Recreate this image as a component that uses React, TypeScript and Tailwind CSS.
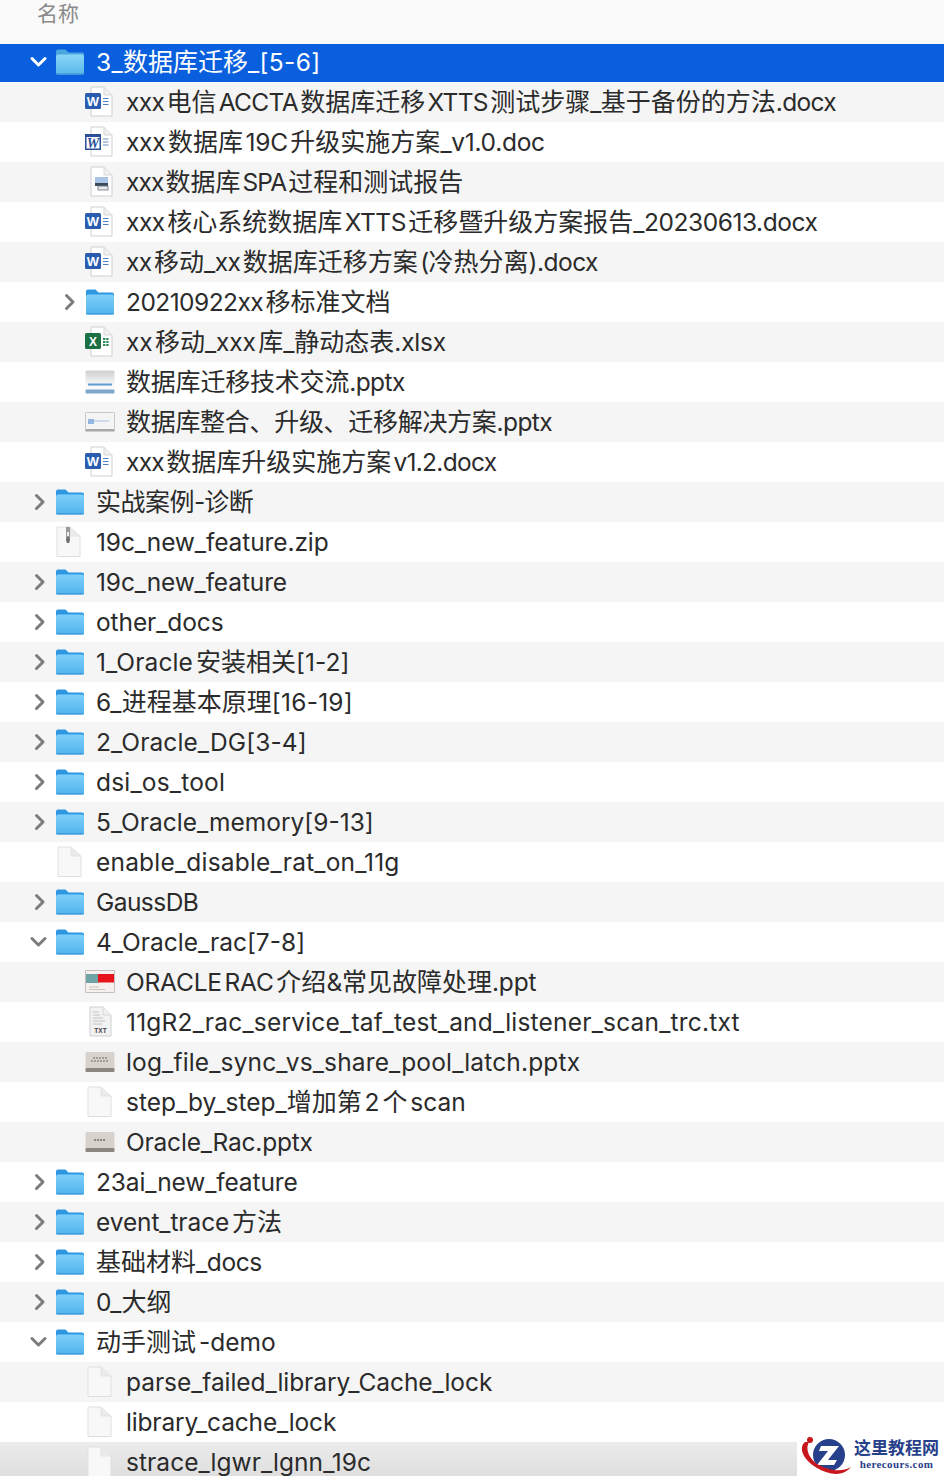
import React from "react";

type Kind = "folder" | "word" | "wordOld" | "spa" | "excel" | "pptBlue" | "pptLine" | "pptRed" | "pptGrey" | "pptGrey2" | "txt" | "blank" | "zip";
type Item = { t: string; k: Kind; l?: number; c?: "open" | "closed"; tr?: string; tc?: string };

const items: Item[] = [
  { t: "3_数据库迁移_[5-6]", k: "folder", c: "open", tr: "tracking-[0.35px]" },
  { t: "xxx 电信 ACCTA 数据库迁移 XTTS 测试步骤_基于备份的方法.docx", k: "word", l: 1, tr: "tracking-[-0.65px]" },
  { t: "xxx 数据库 19C 升级实施方案_v1.0.doc", k: "wordOld", l: 1, tr: "tracking-[-0.28px]" },
  { t: "xxx 数据库 SPA 过程和测试报告", k: "spa", l: 1, tr: "tracking-[-0.9px]" },
  { t: "xxx 核心系统数据库 XTTS 迁移暨升级方案报告_20230613.docx", k: "word", l: 1, tr: "tracking-[-0.46px]" },
  { t: "xx 移动_xx 数据库迁移方案 (冷热分离).docx", k: "word", l: 1, tr: "tracking-[-0.53px]" },
  { t: "20210922xx 移标准文档", k: "folder", l: 1, c: "closed", tr: "tracking-[-0.55px]" },
  { t: "xx 移动_xxx 库_静动态表.xlsx", k: "excel", l: 1, tr: "tracking-[-0.2px]" },
  { t: "数据库迁移技术交流.pptx", k: "pptBlue", l: 1, tr: "tracking-[-0.6px]", tc: "tracking-[-0.2px]" },
  { t: "数据库整合、升级、迁移解决方案.pptx", k: "pptLine", l: 1, tr: "tracking-[-0.6px]", tc: "tracking-[-0.3px]" },
  { t: "xxx 数据库升级实施方案 v1.2.docx", k: "word", l: 1, tr: "tracking-[-0.7px]" },
  { t: "实战案例-诊断", k: "folder", c: "closed", tr: "tracking-[-1px]", tc: "tracking-[-0.5px]" },
  { t: "19c_new_feature.zip", k: "zip", tr: "tracking-[-0.1px]" },
  { t: "19c_new_feature", k: "folder", c: "closed", tr: "tracking-[-0.13px]" },
  { t: "other_docs", k: "folder", c: "closed", tr: "tracking-[-0.1px]" },
  { t: "1_Oracle 安装相关[1-2]", k: "folder", c: "closed", tr: "tracking-[0.1px]" },
  { t: "6_进程基本原理[16-19]", k: "folder", c: "closed", tr: "tracking-[0.25px]" },
  { t: "2_Oracle_DG[3-4]", k: "folder", c: "closed", tr: "tracking-[0.1px]" },
  { t: "dsi_os_tool", k: "folder", c: "closed", tr: "tracking-[0.2px]" },
  { t: "5_Oracle_memory[9-13]", k: "folder", c: "closed" },
  { t: "enable_disable_rat_on_11g", k: "blank", tr: "tracking-[0.2px]" },
  { t: "GaussDB", k: "folder", c: "closed", tr: "tracking-[-0.55px]" },
  { t: "4_Oracle_rac[7-8]", k: "folder", c: "open" },
  { t: "ORACLE RAC 介绍&常见故障处理.ppt", k: "pptRed", l: 1, tr: "tracking-[-0.2px]" },
  { t: "11gR2_rac_service_taf_test_and_listener_scan_trc.txt", k: "txt", l: 1, tr: "tracking-[0.2px]" },
  { t: "log_file_sync_vs_share_pool_latch.pptx", k: "pptGrey", l: 1, tr: "tracking-[0.15px]" },
  { t: "step_by_step_增加第 2 个 scan", k: "blank", l: 1 },
  { t: "Oracle_Rac.pptx", k: "pptGrey2", l: 1, tr: "tracking-[-0.2px]" },
  { t: "23ai_new_feature", k: "folder", c: "closed", tr: "tracking-[-0.12px]" },
  { t: "event_trace 方法", k: "folder", c: "closed", tr: "tracking-[-0.1px]" },
  { t: "基础材料_docs", k: "folder", c: "closed", tr: "tracking-[-0.4px]" },
  { t: "0_大纲", k: "folder", c: "closed" },
  { t: "动手测试 -demo", k: "folder", c: "open" },
  { t: "parse_failed_library_Cache_lock", k: "blank", l: 1, tr: "tracking-[-0.06px]" },
  { t: "library_cache_lock", k: "blank", l: 1, tr: "tracking-[-0.17px]" },
  { t: "strace_lgwr_lgnn_19c", k: "blank", l: 1, tr: "tracking-[0.05px]" },
];

function Page({ children, fill = "#ffffff", x = 6 }: { children?: React.ReactNode; fill?: string; x?: number }) {
  return (
    <svg width="30" height="32" viewBox="0 0 30 32" className="block">
      <path d={`M${x} 1H${x + 13}L${x + 21} 9V30H${x}Z`} fill={fill} stroke="#cfcfcf" strokeWidth="1" />
      <path d={`M${x + 13} 1V9H${x + 21}`} fill="#f0f0f0" stroke="#d8d8d8" strokeWidth="1" />
      {children}
    </svg>
  );
}

function Icon({ k, selected }: { k: Kind; selected?: boolean }) {
  switch (k) {
    case "folder": {
      const id = selected ? "fs" : "fn";
      return (
        <svg width="30" height="28" viewBox="0 0 30 28" className="block">
          <defs>
            <linearGradient id={id} x1="0" y1="0" x2="0" y2="1">
              <stop offset="0" stopColor={selected ? "#8ad6f8" : "#7dd0fa"} />
              <stop offset="1" stopColor={selected ? "#5ab8ea" : "#52b2ee"} />
            </linearGradient>
          </defs>
          <path d="M1 3.5A2 2 0 0 1 3 1.5H10.5L13.5 4.5H27A2 2 0 0 1 29 6.5V10H1Z" fill={selected ? "#4aa6df" : "#2f97e2"} />
          <rect x="1" y="6.5" width="28" height="20" rx="2" fill={`url(#${id})`} />
          <rect x="1" y="25" width="28" height="1.5" rx="0.7" fill={selected ? "#4aa0d8" : "#3f9ddb"} />
        </svg>
      );
    }
    case "word":
      return (
        <Page>
          <rect x="0" y="7" width="16" height="16" rx="1.5" fill="#2a5caf" />
          <text x="8" y="20" textAnchor="middle" fontSize="13" fontWeight="700" fill="#ffffff" fontFamily="Liberation Sans">W</text>
          <path d="M18 12.5H23.5M18 15.5H23.5M18 18.5H23.5" stroke="#4f7fc4" strokeWidth="1" />
        </Page>
      );
    case "wordOld":
      return (
        <Page>
          <rect x="0" y="8" width="16" height="16" fill="#2a4f96" />
          <rect x="1.5" y="11" width="13" height="11.5" fill="#ffffff" />
          <text x="8" y="21.5" textAnchor="middle" fontSize="14" fontWeight="700" fontStyle="italic" fill="#2a4f96" fontFamily="Liberation Serif">W</text>
          <path d="M18 13H23.5M18 16H23.5M18 19H23.5" stroke="#6b8bbd" strokeWidth="1" />
        </Page>
      );
    case "spa":
      return (
        <Page>
          <rect x="10" y="11" width="13" height="7" fill="#a9c4e6" />
          <rect x="10" y="17" width="13" height="3" fill="#3a4a5c" />
          <rect x="13" y="20" width="10" height="4" fill="#e8e8e8" stroke="#6a7480" strokeWidth="0.8" />
        </Page>
      );
    case "excel":
      return (
        <Page>
          <rect x="0" y="7" width="16" height="16" rx="1.5" fill="#1d7044" />
          <text x="8" y="19.5" textAnchor="middle" fontSize="12" fontWeight="700" fill="#ffffff" fontFamily="Liberation Sans">X</text>
          <path d="M18 12h2.4v2H18zM21.2 12h2.4v2h-2.4zM18 15h2.4v2H18zM21.2 15h2.4v2h-2.4zM18 18h2.4v2H18zM21.2 18h2.4v2h-2.4z" fill="#2f8c5a" />
        </Page>
      );
    case "txt":
      return (
        <Page fill="#f2f2f2" x={5}>
          <path d="M8 6H14M8 9H15M8 12H18M8 15H20M8 18H17" stroke="#bdbdbd" strokeWidth="0.9" />
          <text x="15.5" y="27" textAnchor="middle" fontSize="6.5" fontWeight="700" fill="#444" fontFamily="Liberation Sans">TXT</text>
        </Page>
      );
    case "blank":
      return (
        <svg width="30" height="32" viewBox="0 0 30 32" className="block">
          <path d="M3 1H16L26 10V30.5H3Z" fill="#f8f8f8" stroke="#e0e0e0" />
          <path d="M16 1V10H26" fill="#ebebeb" stroke="#e2e2e2" />
        </svg>
      );
    case "zip":
      return (
        <svg width="30" height="32" viewBox="0 0 30 32" className="block">
          <path d="M2 1H15L25 10V30.5H2Z" fill="#f8f8f8" stroke="#e0e0e0" />
          <path d="M15 1V10H25" fill="#ebebeb" stroke="#e2e2e2" />
          <rect x="11" y="1" width="4" height="14" fill="#9a9a9a" />
          <rect x="12" y="6" width="2" height="4" fill="#f0f0f0" />
          <rect x="11.5" y="11" width="3" height="6" rx="1" fill="#6f6f6f" />
        </svg>
      );
    case "pptBlue":
      return (
        <svg width="30" height="26" viewBox="0 0 30 26" className="block">
          <defs>
            <linearGradient id="pb" x1="0" y1="0" x2="0" y2="1">
              <stop offset="0" stopColor="#cfcfcf" />
              <stop offset="0.6" stopColor="#f4f4f4" />
              <stop offset="1" stopColor="#ffffff" />
            </linearGradient>
          </defs>
          <rect x="0.5" y="1.5" width="29" height="21" rx="1" fill="url(#pb)" />
          <rect x="0.5" y="20.5" width="29" height="4" rx="1" fill="#7fa8c8" />
          <rect x="3" y="14.5" width="24" height="2" fill="#5f9cd2" />
        </svg>
      );
    case "pptLine":
      return (
        <svg width="30" height="24" viewBox="0 0 30 24" className="block">
          <rect x="0.5" y="2.5" width="29" height="17" rx="1" fill="#f4f4f4" stroke="#c8c8c8" />
          <rect x="0.5" y="19" width="29" height="2.5" fill="#a8a8a8" />
          <rect x="3" y="9" width="6" height="5" fill="#94b6e2" />
          <path d="M9 11H24" stroke="#a8c0dc" strokeWidth="1" />
        </svg>
      );
    case "pptRed":
      return (
        <svg width="30" height="26" viewBox="0 0 30 26" className="block">
          <rect x="0.5" y="1.5" width="29" height="22" rx="0.5" fill="#f6f1ee" stroke="#c4bebe" />
          <rect x="1" y="5" width="28" height="8.5" fill="#e8141c" />
          <rect x="1" y="5" width="12" height="9" fill="#6fa3a5" />
          <path d="M4 18H14M4 20.5H20" stroke="#c4b6b0" strokeWidth="0.8" />
        </svg>
      );
    case "pptGrey":
    case "pptGrey2":
      return (
        <svg width="30" height="24" viewBox="0 0 30 24" className="block">
          <rect x="0.5" y="2" width="29" height="19" rx="1.5" fill="#d8d2cc" />
          <rect x="0.5" y="18" width="29" height="4" rx="1" fill="#8c867f" />
          {k === "pptGrey" ? (
            <path d="M8 8H23M6 11H24" stroke="#6e6862" strokeWidth="1" strokeDasharray="2 1" />
          ) : (
            <path d="M9 10H21" stroke="#6e6862" strokeWidth="1.4" strokeDasharray="2 1" />
          )}
        </svg>
      );
  }
}

function Chevron({ open, selected }: { open: boolean; selected?: boolean }) {
  return (
    <svg width="20" height="20" viewBox="0 0 20 20" className="block" fill="none" stroke={selected ? "#ffffff" : "#7c7c7c"} strokeWidth="3" strokeLinecap="round" strokeLinejoin="round">
      {open ? <path d="M3 6.5L9.5 13L16 6.5" /> : <path d="M7.5 3.5L14 10L7.5 16.5" />}
    </svg>
  );
}

const CJK = /([\u2E80-\u9FFF\u3000-\u303F\uFF00-\uFFEF]+)/;

function Label({ item }: { item: Item }) {
  return (
    <span className="ml-[11px] whitespace-nowrap leading-none [word-spacing:-4px]">
      {item.t.split(CJK).map((part, i) =>
        i % 2 === 1 ? (
          <span key={i} className={`text-[25px] ${item.tc ?? ""}`}>{part}</span>
        ) : (
          <span key={i} className={`text-[24.5px] ${item.tr ?? ""}`}>{part}</span>
        )
      )}
    </span>
  );
}

function Row({ item, index }: { item: Item; index: number }) {
  const selected = index === 0;
  const last = index === items.length - 1;
  const level = item.l ?? 0;
  const bg = selected
    ? "bg-[#0a5fde] text-white h-[38px] pb-[2px]"
    : last
      ? "bg-gradient-to-b from-[#ececec] to-[#dcdcdc] text-[#2b2b2b] h-10"
      : index % 2 === 1
        ? "bg-[#f5f5f5] text-[#2b2b2b] h-10"
        : "bg-white text-[#2b2b2b] h-10";
  return (
    <div className={`flex items-center shrink-0 overflow-hidden ${bg}`}>
      <div className={level === 1 ? "w-[56px] shrink-0" : "w-[26px] shrink-0"} />
      <div className="w-[26px] shrink-0 flex items-center justify-center">
        {item.c ? <Chevron open={item.c === "open"} selected={selected} /> : null}
      </div>
      <div className="w-[30px] ml-[3px] shrink-0 flex items-center justify-center">
        <Icon k={item.k} selected={selected} />
      </div>
      <Label item={item} />
    </div>
  );
}

export default function App() {
  return (
    <div className="relative w-[944px] h-[1476px] overflow-hidden bg-white font-['Inter','Noto_Sans_CJK_SC',sans-serif]">
      <div className="h-[44px] bg-[#fafafa] pl-[37px] pt-[1px] text-[21px] leading-[26px] text-[#8a8a8a]">名称</div>
      <div className="flex flex-col">
        {items.map((it, i) => (
          <Row key={i} item={it} index={i} />
        ))}
      </div>
      <div className="absolute right-0 bottom-0 w-[147px] h-[42px] bg-white flex items-center">
        <svg width="56" height="42" viewBox="0 0 56 42" className="block shrink-0">
          <circle cx="32" cy="21" r="16" fill="#27408b" />
          <path d="M24 12H42L31 26H40L37 31H20L31 17H22Z" fill="#ffffff" />
          <path d="M8 8C1 14 6 26 20 34C32 41 46 43 54 33C44 39 30 36 20 30C12 24 8 15 12 8Z" fill="#c8161d" />
          <circle cx="13" cy="6" r="3" fill="#c8161d" />
        </svg>
        <div className="ml-[1px] flex flex-col items-center font-['Liberation_Serif','Noto_Sans_CJK_SC',serif] font-bold text-[#27408b]">
          <span className="text-[17px] leading-[19px]">这里教程网</span>
          <span className="text-[11px] leading-[13px] tracking-[0.4px]">herecours.com</span>
        </div>
      </div>
    </div>
  );
}
